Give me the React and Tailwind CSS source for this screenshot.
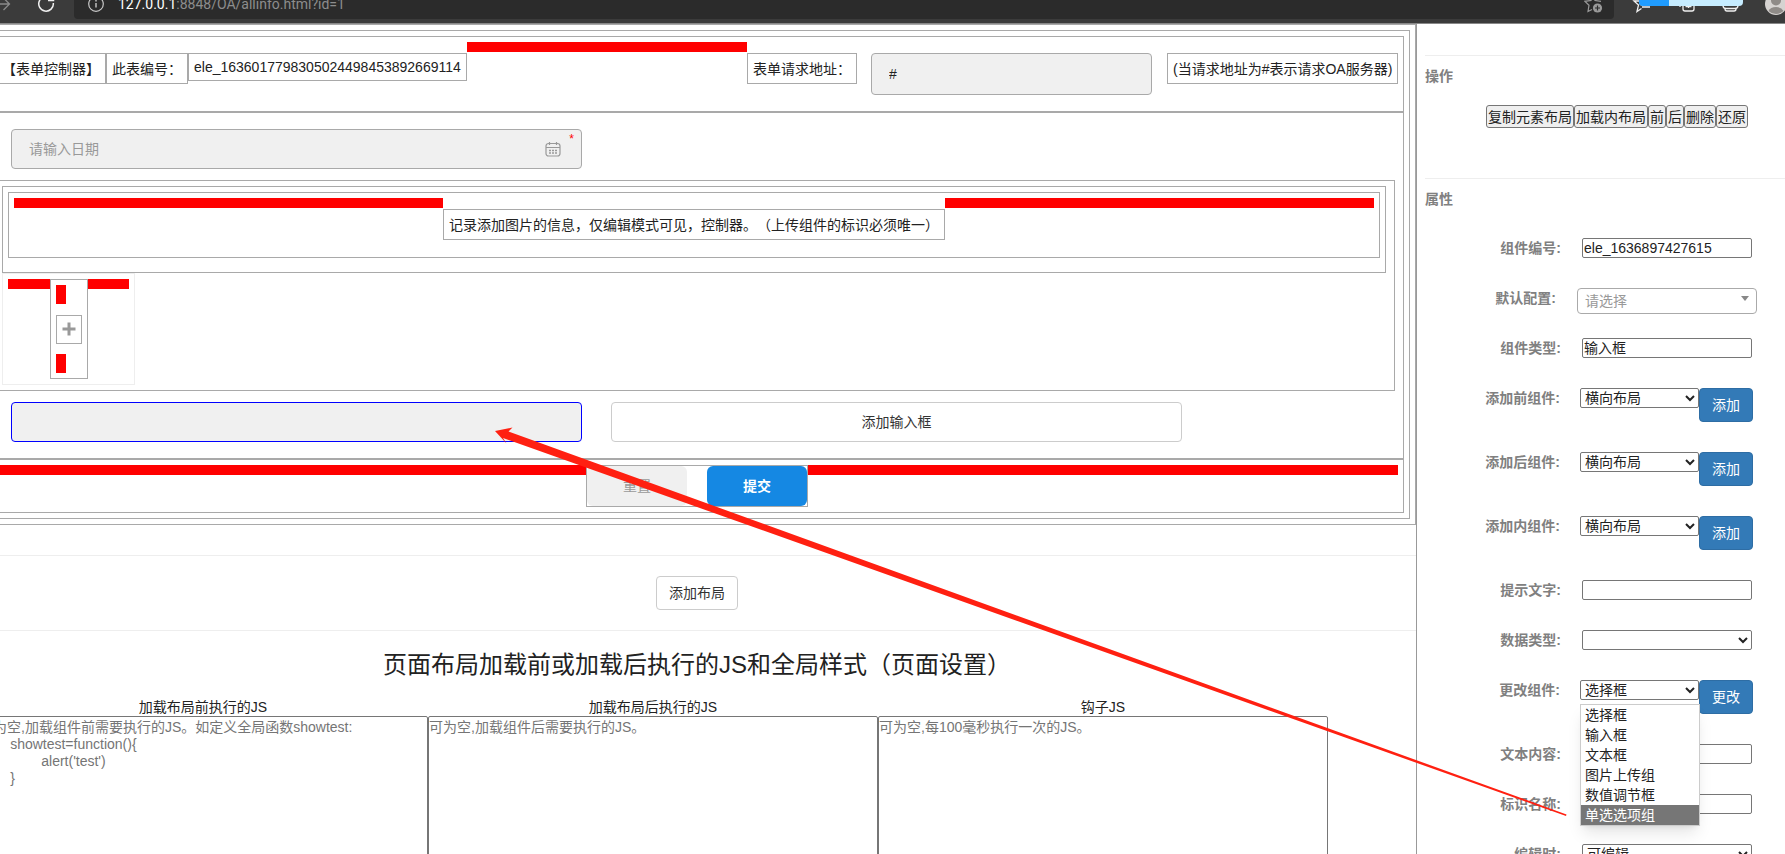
import { useState } from 'react'

const FIELDS = [
  { id: 'code', label: '组件编号:', type: 'text', value: 'ele_1636897427615' },
  { id: 'preset', label: '默认配置:', type: 'preset' },
  { id: 'kind', label: '组件类型:', type: 'text', value: '输入框' },
  { id: 'before', label: '添加前组件:', type: 'action', option: '横向布局', button: '添加' },
  { id: 'after', label: '添加后组件:', type: 'action', option: '横向布局', button: '添加' },
  { id: 'inner', label: '添加内组件:', type: 'action', option: '横向布局', button: '添加' },
  { id: 'hint', label: '提示文字:', type: 'text', value: '' },
  { id: 'datatype', label: '数据类型:', type: 'select', option: '' },
  { id: 'change', label: '更改组件:', type: 'action', option: '选择框', button: '更改', menu: true },
  { id: 'content', label: '文本内容:', type: 'text', value: '' },
  { id: 'name', label: '标识名称:', type: 'text', value: '' },
  { id: 'editing', label: '编辑时:', type: 'select', option: '可编辑' },
]

const MENU = ['选择框', '输入框', '文本框', '图片上传组', '数值调节框', '单选选项组']

const ACTIONS = ['复制元素布局', '加载内布局', '前', '后', '删除', '还原']

const SCRIPTS = [
  {
    id: 'js-before',
    title: '加载布局前执行的JS',
    placeholder: "可为空,加载组件前需要执行的JS。如定义全局函数showtest:\n\tshowtest=function(){\n\t\talert('test')\n\t}",
  },
  { id: 'js-after', title: '加载布局后执行的JS', placeholder: '可为空,加载组件后需要执行的JS。' },
  { id: 'js-hook', title: '钩子JS', placeholder: '可为空,每100毫秒执行一次的JS。' },
]

function BrowserBar() {
  return (
    <header className="relative h-6 shrink-0 overflow-hidden border-b border-[#888] bg-[#3b3b3b]">
      <div className="-mt-[11px] flex h-[30px] items-center">
        <svg className="h-[30px] w-[74px] shrink-0" viewBox="0 0 74 30" fill="none">
          <path d="M0 15h9M3.500 9l6 6-6 6" stroke="#8b8b8b" strokeWidth="1.300" />
          <path d="M51 9.500a7.300 7.300 0 1 0 2.300 4.500M53.500 6v5.500h-5.500" stroke="#f0f0f0" strokeWidth="1.500" />
        </svg>
        <div className="flex h-[30px] min-w-0 flex-1 items-center rounded bg-[#2b2b2b] pr-2.5 pl-3.5">
          <svg className="h-4 w-4 shrink-0" viewBox="0 0 16 16" fill="none" stroke="#c8c8c8" strokeWidth="1.200">
            <circle cx="8" cy="8" r="7.300" />
            <path d="M8 7v4.500M8 4v1.500" strokeWidth="1.400" />
          </svg>
          <p className="ml-3.5 flex-1 font-[Roboto,'Noto_Sans',sans-serif] text-[14px] leading-4 text-[#8d8d8d]">
            <span className="text-white">127.0.0.1</span>:8848/OA/allinfo.html?id=1
          </p>
          <svg className="h-5 w-5 shrink-0" viewBox="0 0 20 20" fill="none" stroke="#999" strokeWidth="1.200">
            <path d="M9 2l2 4.500 6 .8M9 2L7 6.500l-6 .8 4 4-1 6.200 4-2" />
            <circle cx="13.500" cy="14" r="4.600" fill="#999" stroke="none" />
            <path d="M13.500 11.500v5M11 14h5" stroke="#2b2b2b" />
          </svg>
        </div>
        <svg className="h-[30px] w-[171px] shrink-0" viewBox="0 0 171 30" fill="none" stroke="#f0f0f0" strokeWidth="1.300">
          <path d="M26 12h-6l4.500 4-1.500 6.500 4.500-3M28 14h8M28 18h8" />
          <rect x="69" y="10" width="11" height="12" rx="2" />
          <path d="M66 12v6M74.500 13v6M71.500 17.500h6" />
          <path d="M109 14v2.500q0 3 3 3h9q3 0 3-3V14M111 20q0 2 2 2h7q2 0 2-2M113 16h1M116 16h1M119 16h1" />
          <g stroke="none">
            <circle cx="162" cy="15" r="11" fill="#d6d3d1" />
            <circle cx="162" cy="11.500" r="5" fill="#8f8b88" />
            <path d="M154.500 22a8 6 0 0 1 15 0a11 11 0 0 1-15 0z" fill="#8f8b88" />
          </g>
        </svg>
      </div>
      <div className="absolute top-0 right-[42px] flex h-1.5 w-[104px] overflow-hidden rounded-b bg-[#c6ecff]">
        <div className="w-[30px] bg-[#209cff]" />
      </div>
    </header>
  )
}

function Tag({ children, className = 'h-[31px] leading-[31px]' }) {
  return (
    <div
      className={`mt-[11px] shrink-0 border border-[#a9a9a9] px-[5px] whitespace-nowrap [text-spacing-trim:space-all] ${className}`}
    >
      {children}
    </div>
  )
}

function Filler() {
  return <div className="h-2.5 flex-1 bg-[#ff0000]" />
}

function FormCanvas() {
  return (
    <div className="border border-[#a9a9a9] p-[5px]">
      <div className="border border-[#a9a9a9] p-[5px]">
        {/* Form controller */}
        <div className="flex h-[76px] items-start border border-[#a9a9a9] p-[5px]">
          <Tag>【表单控制器】</Tag>
          <Tag>此表编号：</Tag>
          <Tag className="h-7 w-[279px] leading-[26px]">ele_1636017798305024498453892669114</Tag>
          <Filler />
          <Tag>
            <label htmlFor="request-url">表单请求地址：</label>
          </Tag>
          <input
            id="request-url"
            className="mt-[11px] mr-[15px] ml-3.5 h-[42px] w-[281px] rounded border border-[#a9a9a9] bg-[#f0f0f0] px-[17px]"
            defaultValue="#"
          />
          <Tag className="h-[31px] w-[231px] leading-[31px]">(当请求地址为#表示请求OA服务器)</Tag>
        </div>

        {/* Form body */}
        <div className="border border-[#a9a9a9] pt-4 pb-4 pl-[5px]">
          <div className="relative ml-[15px] h-10 w-[571px]">
            <input
              aria-label="请输入日期"
              placeholder="请输入日期"
              className="h-full w-full rounded border border-[#a9a9a9] bg-[#f0f0f0] px-[17px] placeholder:text-[#999]"
            />
            <svg
              className="absolute top-3 right-[21px] h-4 w-4"
              viewBox="0 0 16 16"
              fill="none"
              stroke="#999"
              strokeWidth="1.200"
            >
              <rect x="1" y="2.500" width="14" height="12.500" rx="2.500" />
              <path d="M1 6.500h14M4.500 1v3M11.500 1v3" />
              <path d="M4 9.500h2M7 9.500h2M10 9.500h2M4 12h2M7 12h2M10 12h2" strokeWidth="1.400" />
            </svg>
            <span className="absolute top-1 right-2 text-[12px] leading-3 text-[#ff0000]">*</span>
          </div>

          <div className="mt-[11px] mr-2 h-[211px] border border-[#a9a9a9] pt-[5px] pr-2 pl-[5px]">
            <div className="h-[87px] border border-[#a9a9a9] p-[5px]">
              <div className="flex h-[66px] items-start border border-[#a9a9a9] p-[5px]">
                <Filler />
                <Tag>记录添加图片的信息，仅编辑模式可见，控制器。（上传组件的标识必须唯一）</Tag>
                <Filler />
              </div>
            </div>
            <div className="flex h-28 w-[133px] items-start border border-[#eee] p-[5px]">
              <Filler />
              <div className="flex h-[100px] w-[38px] flex-col items-start justify-between border border-[#a9a9a9] p-[5px]">
                <div className="h-[19px] w-2.5 bg-[#ff0000]" />
                <button aria-label="添加图片" className="grid h-[29px] w-[26px] place-items-center border border-[#a9a9a9]">
                  <svg className="h-3.5 w-3.5" viewBox="0 0 14 14" fill="#999">
                    <path d="M5.500 0.500h3v5h5v3h-5v5h-3v-5h-5v-3h5z" />
                  </svg>
                </button>
                <div className="h-[19px] w-2.5 bg-[#ff0000]" />
              </div>
              <Filler />
            </div>
          </div>

          <div className="mt-[11px] ml-[15px] flex gap-[29px]">
            <input
              aria-label="输入框"
              className="h-10 w-[571px] rounded border border-[#0000ff] bg-[#f0f0f0] px-[17px]"
            />
            <button className="h-10 w-[571px] rounded border border-[#ccc] bg-white text-[#333]">添加输入框</button>
          </div>
        </div>

        {/* Form buttons */}
        <div className="flex h-[54px] items-start border border-[#a9a9a9] p-[5px]">
          <Filler />
          <div className="flex h-[42px] w-[222px] justify-between border border-[#a9a9a9]">
            <button className="w-[100px] rounded-md bg-[#f0f0f0] text-[#999]">重置</button>
            <button className="w-[100px] rounded-md bg-[#1588e3] font-bold text-white">提交</button>
          </div>
          <Filler />
        </div>
      </div>
    </div>
  )
}

function ComponentMenu() {
  return (
    <ul className="absolute top-6 left-0 z-10 w-[120px] border border-[#ccc] bg-white shadow-lg">
      {MENU.map((item) => (
        <li
          key={item}
          className={`h-5 px-1 leading-5 ${item === '单选选项组' ? 'bg-[#767676] text-white' : 'text-[#222]'}`}
        >
          {item}
        </li>
      ))}
    </ul>
  )
}

function Field({ field }) {
  const [value, setValue] = useState(field.value)

  if (field.type === 'preset') {
    return (
      <div className="mb-6 flex gap-[21px]">
        <label htmlFor={field.id} className="w-[131px] text-right leading-5 font-bold text-[#808080]">
          {field.label}
        </label>
        <div className="relative">
          <select
            id={field.id}
            className="block h-[26px] w-[180px] appearance-none rounded border border-[#aaa] bg-white px-[7px] text-[#999]"
          >
            <option>请选择</option>
          </select>
          <svg className="pointer-events-none absolute top-2 right-2 h-[5px] w-2" viewBox="0 0 8 5" fill="#888">
            <path d="M0 0h8L4 5z" />
          </svg>
        </div>
      </div>
    )
  }

  if (field.type === 'action') {
    return (
      <div className="mb-[30px] flex items-start gap-5">
        <label htmlFor={field.id} className="w-[135px] text-right leading-5 font-bold text-[#808080]">
          {field.label}
        </label>
        <div className="relative flex items-start">
          <select id={field.id} className="h-5 w-[119px] rounded-[2px] border border-[#767676] bg-white text-[#222]">
            <option>{field.option}</option>
          </select>
          <button className="h-[34px] w-[54px] rounded border border-[#2e6da4] bg-[#337ab7] text-white">
            {field.button}
          </button>
          {field.menu && <ComponentMenu />}
        </div>
      </div>
    )
  }

  return (
    <div className="mb-[30px] flex gap-[21px]">
      <label htmlFor={field.id} className="w-[136px] text-right leading-5 font-bold text-[#808080]">
        {field.label}
      </label>
      {field.type === 'select' ? (
        <select id={field.id} className="h-5 w-[170px] rounded-[2px] border border-[#767676] bg-white text-[#222]">
          <option>{field.option}</option>
        </select>
      ) : (
        <input
          id={field.id}
          value={value}
          onChange={(e) => setValue(e.target.value)}
          className="h-5 w-[170px] rounded-[2px] border border-[#767676] px-px text-[#222]"
        />
      )}
    </div>
  )
}

function App() {
  return (
    <div className="relative flex h-screen flex-col overflow-hidden bg-white font-['Liberation_Sans','Noto_Sans_CJK_SC',sans-serif] text-[14px] text-[#222]">
      <BrowserBar />

      <div className="flex min-h-0 flex-1">
        <main className="min-w-0 flex-1 overflow-hidden border-r border-[#999]">
          {/* canvas is scrolled a little to the right */}
          <div className="-ml-[22px]">
            <FormCanvas />

            <div className="mt-[30px] border-y border-[#eee] py-5 text-center">
              <button className="h-[34px] w-[82px] rounded border border-[#ccc] bg-white text-[#333]">添加布局</button>
            </div>

            <h1 className="mt-[17px] text-center text-[24px] leading-[34px]">
              页面布局加载前或加载后执行的JS和全局样式（页面设置）
            </h1>

            <div className="mt-4 flex">
              {SCRIPTS.map((script) => (
                <div key={script.id} className="w-[450px] text-center">
                  <label htmlFor={script.id} className="block leading-[18px]">{script.title}</label>
                  <textarea
                    id={script.id}
                    placeholder={script.placeholder}
                    className="block h-[200px] w-full resize-none rounded-[2px] border border-[#767676] py-0.5 text-left leading-[17px] [tab-size:8] placeholder:text-[#757575]"
                  />
                </div>
              ))}
            </div>
          </div>
        </main>

        <aside className="w-[368px] shrink-0 overflow-hidden pt-[31px] pl-2">
          <section className="h-[123px] border-t border-[#eee] pt-2.5">
            <h2 className="leading-5 font-bold text-[#808080]">操作</h2>
            <div className="mt-[19px] ml-[61px] flex">
              {ACTIONS.map((action) => (
                <button
                  key={action}
                  className="h-[23px] rounded-[3px] border border-[#767676] bg-[#efefef] px-px leading-[23px] whitespace-nowrap"
                >
                  {action}
                </button>
              ))}
            </div>
          </section>
          <section className="border-t border-[#eee] pt-2.5">
            <h2 className="mb-[29px] leading-5 font-bold text-[#808080]">属性</h2>
            {FIELDS.map((field) => (
              <Field key={field.id} field={field} />
            ))}
          </section>
        </aside>
      </div>

      <svg
        className="pointer-events-none absolute top-[427px] left-[494px] z-20 h-[390px] w-[1074px]"
        viewBox="494 427 1074 390"
        fill="#ff2011"
      >
        <path d="M495 431L512.500 427.500L508.500 431.500L1566.500 814.500L1566 816L503 438L506.500 443.500Z" />
      </svg>
    </div>
  )
}

export default App
